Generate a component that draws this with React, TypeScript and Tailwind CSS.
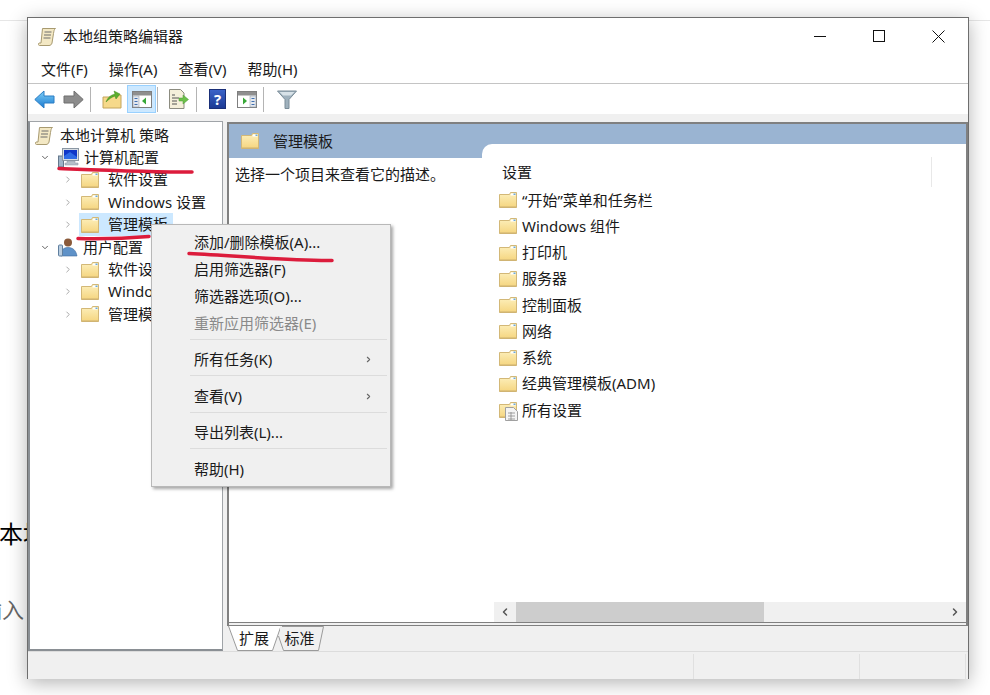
import React from 'react';
import { ChevronDown, ChevronRight, ChevronLeft } from 'lucide-react';

function Folder({ className = '' }: { className?: string }) {
    return (
        <svg viewBox="0 0 18 16" className={`w-[18px] h-[16px] shrink-0 ${className}`}>
            <defs>
                <linearGradient id="folderFill" x1="0" y1="0" x2="0" y2="1">
                    <stop offset="0" stopColor="#fdf0bd" />
                    <stop offset="1" stopColor="#f5d57f" />
                </linearGradient>
            </defs>
            <path d="M.5 2.500H10.500L11.500 .5h6v15H.5z" fill="url(#folderFill)" stroke="#d3b877" />
            <path d="M12 1.500h4.500v2H11.500z" fill="#fff" />
            <path d="M14.500 1.500h2v1.500h-2z" fill="#6aa9dc" />
            <path d="M.5 14.500h17v1H.5z" fill="#cdb071" />
        </svg>
    );
}

function Scroll({ className = '' }: { className?: string }) {
    return (
        <svg viewBox="0 0 19 19" className={`w-[19px] h-[19px] shrink-0 ${className}`}>
            <path d="M4.500 1.500h13c-1.500 1-1.500 2.500-2 5l-1.500 9.500c-.3 1.500-1.500 2.500-3 2.500H1.500c-1.200 0-1.500-2-.5-2.500h2z" fill="#f3e8c4" stroke="#a89a70" />
            <path d="M6.500 5h7M6 8h7M5.500 11h7" stroke="#6d6d6d" strokeWidth="1" />
        </svg>
    );
}

function Computer() {
    return (
        <svg viewBox="0 0 21 20" className="w-[21px] h-[20px] shrink-0">
            <rect x="0.500" y="8" width="5" height="11" fill="#9fb4c8" stroke="#64788c" />
            <rect x="4.500" y="0.500" width="16" height="12" fill="#d7dde3" stroke="#8b97a3" />
            <rect x="6" y="2" width="13" height="9" fill="#0f37c8" />
            <path d="M6 8l6-4 7 5v2H6z" fill="#2e6be6" />
            <path d="M9 13h8v2h3v2H7v-2h2z" fill="#b6c0ca" stroke="#8b97a3" strokeWidth=".5" />
        </svg>
    );
}

function User() {
    return (
        <svg viewBox="0 0 20 19" className="w-[20px] h-[19px] shrink-0">
            <circle cx="10" cy="4.500" r="4" fill="#8a5a3a" />
            <path d="M3 18c0-6 2.500-8.500 7-8.500s8 2.500 9 8.500z" fill="#5f92c8" stroke="#3f6c9e" strokeWidth=".6" />
            <rect x="0.500" y="7" width="4" height="11" rx="1" fill="#b9cde0" stroke="#5f7f9f" />
        </svg>
    );
}

function Sep() {
    return <div className="w-px h-[25px] bg-[#b4b4b4] shrink-0" />;
}

function Toolbar() {
    return (
        <div className="h-[30px] bg-white flex items-center pl-[6px] shrink-0">
            <svg viewBox="0 0 21 19" className="w-[21px] h-[19px] shrink-0">
                <defs>
                    <linearGradient id="backFill" x1="0" y1="0" x2="0" y2="1">
                        <stop offset="0" stopColor="#7fd0f7" />
                        <stop offset="1" stopColor="#1878d0" />
                    </linearGradient>
                </defs>
                <path d="M10 1L.8 9.500 10 18v-5h10V6H10z" fill="url(#backFill)" stroke="#2a7cc4" />
            </svg>
            <svg viewBox="0 0 21 19" className="w-[21px] h-[19px] shrink-0 ml-[8px]">
                <path d="M11 1l9.200 8.500L11 18v-5H1V6h10z" fill="#8c8c8c" stroke="#6f6f6f" />
            </svg>
            <div className="ml-[6px]"><Sep /></div>
            <svg viewBox="0 0 20 20" className="w-[20px] h-[20px] shrink-0 ml-[11px]">
                <path d="M1 8h7l5-2h6v13H1z" fill="#f6d98a" stroke="#c4a45c" />
                <path d="M4 13c2-5 5-7 9-8l-1-3 6 3-4 5-1-3c-3 1-6 3-9 6z" fill="#5cae2e" stroke="#3f8a1e" strokeWidth=".5" />
            </svg>
            <div className="ml-[5px] w-[29px] h-[28px] bg-[#cce8ff] border border-[#99d1ff] flex items-center justify-center shrink-0">
                <svg viewBox="0 0 20 17" className="w-[20px] h-[17px]">
                    <rect x=".5" y=".5" width="19" height="16" fill="#fff" stroke="#7f7f7f" />
                    <rect x="1" y="1" width="18" height="3.500" fill="#8f8f8f" />
                    <rect x="1" y="5" width="6" height="11" fill="#e4e8ee" stroke="#8b97a3" strokeWidth=".5" />
                    <path d="M2.500 7.500h3M2.500 10.500h3M2.500 13.500h3" stroke="#3f6fb0" />
                    <path d="M14 6.500v7l-4-3.500z" fill="#38a838" />
                </svg>
            </div>
            <div className="ml-[1px]"><Sep /></div>
            <svg viewBox="0 0 21 20" className="w-[21px] h-[20px] shrink-0 ml-[10px]">
                <path d="M1.500.5h11l3.500 3.500v15.500H1.500z" fill="#f5f0da" stroke="#8c8c80" />
                <path d="M4 6h3M4 9h7M4 12h5M4 15h5" stroke="#555" />
                <path d="M11 9h4V6l5.500 4.500L15 15v-3h-4z" fill="#6cc04a" stroke="#4e9a34" strokeWidth=".5" />
            </svg>
            <div className="ml-[7px]"><Sep /></div>
            <div className="ml-[12px] w-[17px] h-[20px] bg-gradient-to-b from-[#3a63c8] to-[#1c3a94] border border-[#1a2f78] flex items-center justify-center shrink-0">
                <span className="text-white font-bold text-[15px] leading-none">?</span>
            </div>
            <svg viewBox="0 0 20 17" className="w-[20px] h-[17px] shrink-0 ml-[11px]">
                <rect x=".5" y=".5" width="19" height="16" fill="#fff" stroke="#7f7f7f" />
                <rect x="1" y="1" width="18" height="3.500" fill="#8f8f8f" />
                <rect x="13" y="5" width="6" height="11" fill="#e4e8ee" stroke="#8b97a3" strokeWidth=".5" />
                <path d="M14.500 7.500h3M14.500 10.500h3M14.500 13.500h3" stroke="#3f6fb0" />
                <path d="M6 6.500v7l4-3.500z" fill="#38a838" />
            </svg>
            <div className="ml-[6px]"><Sep /></div>
            <svg viewBox="0 0 20 19" className="w-[20px] h-[19px] shrink-0 ml-[13px]">
                <path d="M.5 1h19L12 9.500V18.500H8V9.500z" fill="#9fb1bd" stroke="#7a8c98" />
                <path d="M2.500 2h15L14 5.500H6z" fill="#d8e2e8" />
            </svg>
        </div>
    );
}

interface TreeRowProps {
    level: number;
    open?: boolean;
    selected?: boolean;
    icon: React.ReactNode;
    label: string;
}

function TreeRow({ level, open, selected, icon, label }: TreeRowProps) {
    return (
        <div className="h-[22.400px] flex items-center">
            <div className={level === 1 ? 'w-[10px] shrink-0' : 'w-[33px] shrink-0'} />
            <div className="w-[10px] shrink-0 flex justify-center">
                {open
                    ? <ChevronDown className="w-[11px] h-[11px] text-[#444]" />
                    : <ChevronRight className="w-[11px] h-[11px] text-[#999]" />}
            </div>
            {level === 1 ? (
                <div className="ml-[8px] flex items-center gap-[5px]">
                    {icon}
                    <span>{label}</span>
                </div>
            ) : (
                <div className={`ml-[6px] flex items-center gap-[9px] h-[23px] pl-[2px] pr-[5px] ${selected ? 'bg-[#cce8ff]' : ''}`}>
                    {icon}
                    <span className="whitespace-nowrap">{label}</span>
                </div>
            )}
        </div>
    );
}

function Tree() {
    return (
        <div className="w-[195px] bg-white border-l-2 border-b-2 border-r border-t border-l-[#8a8f94] border-b-[#8a8f94] border-r-[#a0a4a8] border-t-[#a0a4a8] pt-[2px] overflow-hidden shrink-0">
            <div className="h-[22.400px] flex items-center pl-[5px] gap-[6px]">
                <Scroll />
                <span>本地计算机 策略</span>
            </div>
            <TreeRow level={1} open icon={<Computer />} label="计算机配置" />
            <TreeRow level={2} icon={<Folder />} label="软件设置" />
            <TreeRow level={2} icon={<Folder />} label="Windows 设置" />
            <TreeRow level={2} selected icon={<Folder />} label="管理模板" />
            <TreeRow level={1} open icon={<User />} label="用户配置" />
            <TreeRow level={2} icon={<Folder />} label="软件设置" />
            <TreeRow level={2} icon={<Folder />} label="Windows 设置" />
            <TreeRow level={2} icon={<Folder />} label="管理模板" />
        </div>
    );
}

const settings = ['“开始”菜单和任务栏', 'Windows 组件', '打印机', '服务器', '控制面板', '网络', '系统', '经典管理模板(ADM)'];

function ListPane() {
    return (
        <div className="flex-1 bg-[#9ab4d2] flex flex-col pt-[20px] min-w-0">
            <div className="flex-1 bg-white rounded-tl-[10px] relative flex flex-col min-h-0">
                <div className="h-[43px] pl-[20px] pt-[13px] flex items-center relative">
                    <span>设置</span>
                    <div className="absolute right-[34px] top-[13px] w-px h-[30px] bg-[#e8e8e8]" />
                </div>
                <div className="flex-1 pl-[17px]">
                    {settings.map((s) => (
                        <div key={s} className="h-[26.250px] flex items-center gap-[5px]">
                            <Folder />
                            <span>{s}</span>
                        </div>
                    ))}
                    <div className="h-[26.250px] flex items-center gap-[5px]">
                        <div className="relative w-[18px] h-[16px] shrink-0">
                            <Folder />
                            <svg viewBox="0 0 13 14" className="absolute left-[6px] top-[5px] w-[13px] h-[14px]">
                                <path d="M.5.5h8l4 4v9H.5z" fill="#f4f4f4" stroke="#a0a0a0" />
                                <path d="M3 6h7M3 9h7M3 12h7M6 5v8" stroke="#8a8a8a" strokeWidth=".8" />
                            </svg>
                        </div>
                        <span>所有设置</span>
                    </div>
                </div>
                <div className="h-[20px] ml-[12px] bg-[#f0f0f0] flex items-stretch shrink-0">
                    <div className="w-[22px] flex items-center justify-center">
                        <ChevronLeft className="w-[12px] h-[12px] text-[#555]" strokeWidth={3} />
                    </div>
                    <div className="w-[248px] bg-[#cdcdcd]" />
                    <div className="flex-1" />
                    <div className="w-[22px] flex items-center justify-center">
                        <ChevronRight className="w-[12px] h-[12px] text-[#555]" strokeWidth={3} />
                    </div>
                </div>
            </div>
        </div>
    );
}

function DetailPane() {
    return (
        <div className="h-[504px] border-l-2 border-t-2 border-r-2 border-b border-[#808080] pb-[2px] flex flex-col shrink-0">
            <div className="flex-1 min-h-0 bg-white flex border-b border-[#808080]">
                <div className="w-[253px] flex flex-col shrink-0">
                    <div className="h-[34px] bg-[#9ab4d2] flex items-center pl-[12px] gap-[14px]">
                        <Folder />
                        <span>管理模板</span>
                    </div>
                    <div className="pl-[6px] pt-[9px]">选择一个项目来查看它的描述。</div>
                </div>
                <ListPane />
            </div>
        </div>
    );
}

function Tabs() {
    return (
        <div className="flex h-[25px] pl-[1px]">
            <div className="relative w-[52px] flex items-center justify-center">
                <svg viewBox="0 0 52 25" className="absolute inset-0 w-[52px] h-[25px]">
                    <path d="M.5 0L9.500 24.500h35L53 0" fill="#fff" stroke="#9a9a9a" />
                </svg>
                <span className="relative">扩展</span>
            </div>
            <div className="relative w-[46px] -ml-[2px] flex items-center justify-center pr-[3px]">
                <svg viewBox="0 0 46 25" className="absolute inset-0 w-[46px] h-[25px]">
                    <path d="M.5 10L5.500 24.500h35L45.500 .5H4" fill="#f0f0f0" stroke="#9a9a9a" />
                </svg>
                <span className="relative">标准</span>
            </div>
        </div>
    );
}

function ContextMenu() {
    const Row = ({ text, h, arrow, off }: { text: string; h: string; arrow?: boolean; off?: boolean }) => (
        <div className={`${h} flex items-center justify-between pl-[42px] pr-[17px] ${off ? 'text-[#8a8a8a]' : ''}`}>
            <span>{text}</span>
            {arrow && <ChevronRight className="w-[9px] h-[9px] text-[#666]" strokeWidth={3} />}
        </div>
    );
    const Line = () => <div className="h-px ml-[38px] mr-[3px] bg-[#dcdcdc] shrink-0" />;
    return (
        <div className="absolute left-[123px] top-[206px] w-[240px] h-[263px] bg-[#f0f0f0] border border-[#b8b8b8] shadow-[2px_2px_3px_rgba(0,0,0,0.35)] pt-[3px]">
            <Row text="添加/删除模板(A)..." h="h-[27.200px] pt-[1px]" />
            <Row text="启用筛选器(F)" h="h-[27.200px] pt-[1px]" />
            <Row text="筛选器选项(O)..." h="h-[27.200px] pt-[1px]" />
            <Row text="重新应用筛选器(E)" h="h-[27.200px] pt-[1px]" off />
            <div className="h-[2.200px]" />
            <Line />
            <Row text="所有任务(K)" h="h-[35.500px] pt-[4px]" arrow />
            <Line />
            <Row text="查看(V)" h="h-[35.500px] pt-[4px]" arrow />
            <Line />
            <Row text="导出列表(L)..." h="h-[35.500px] pt-[4px]" />
            <Line />
            <Row text="帮助(H)" h="h-[35.500px] pt-[4px]" />
        </div>
    );
}

export default function App() {
    return (
        <div className="relative w-[990px] h-[695px] bg-white overflow-hidden font-['Noto_Sans','Noto_Sans_CJK_SC',sans-serif] text-[15px] leading-none text-[#1a1a1a]">
            {/* what is left of the page behind the window */}
            <div className="absolute left-0 right-0 top-[20px] h-px bg-[#e6e6e6]" />
            <div className="absolute left-[-1px] top-[522px] text-[24px] text-black whitespace-nowrap">本地</div>
            <div className="absolute left-[-20px] top-[598px] text-[22px] text-[#666] whitespace-nowrap">输入</div>

            <div className="absolute left-[27px] top-[17px] w-[942px] h-[662px] bg-[#f0f0f0] border-l border-r border-t border-[#6e6e6e] shadow-[0_4px_18px_rgba(0,0,0,0.3)] flex flex-col">
                <div className="h-[36px] bg-white flex items-center pl-[10px] shrink-0">
                    <Scroll />
                    <span className="ml-[6px]">本地组策略编辑器</span>
                    <div className="ml-auto flex items-center pr-[23px] gap-[46px]">
                        <svg viewBox="0 0 13 13" className="w-[13px] h-[13px]"><path d="M0 6.500h12" stroke="#111" /></svg>
                        <svg viewBox="0 0 13 13" className="w-[13px] h-[13px]"><rect x=".5" y=".5" width="11" height="11" fill="none" stroke="#111" /></svg>
                        <svg viewBox="0 0 13 13" className="w-[13px] h-[13px]"><path d="M.5.500l12 12M12.500.500l-12 12" stroke="#111" /></svg>
                    </div>
                </div>
                <div className="h-[30px] bg-white flex items-center pl-[13px] pt-[2px] gap-[21px] border-b border-[#c4c4c4] shrink-0">
                    <span>文件(F)</span>
                    <span>操作(A)</span>
                    <span>查看(V)</span>
                    <span>帮助(H)</span>
                </div>
                <Toolbar />
                <div className="flex-1 flex pt-[7px] min-h-0">
                    <Tree />
                    <div className="ml-[4px] flex-1 min-w-0 flex flex-col pt-[1px]">
                        <DetailPane />
                        <Tabs />
                    </div>
                </div>
                <div className="h-[28px] border-t border-[#dcdcdc] flex justify-end shrink-0 pt-[2px]">
                    <div className="w-[166px] border-l border-[#e0e0e0]" />
                    <div className="w-[107px] border-l border-r border-[#e0e0e0] mr-[2px]" />
                </div>
                <ContextMenu />
            </div>

            {/* red marks drawn over the screenshot */}
            <svg className="absolute inset-0 w-[990px] h-[695px] pointer-events-none" viewBox="0 0 990 695">
                <path d="M59 168.500C100 170 150 172 192 172" fill="none" stroke="#dc1c3c" strokeWidth="3.500" strokeLinecap="round" />
                <path d="M78 238.500C100 239 130 238 149 236.500" fill="none" stroke="#dc1c3c" strokeWidth="3.500" strokeLinecap="round" />
                <path d="M189 253.500C240 256 290 261 332 260.500" fill="none" stroke="#dc1c3c" strokeWidth="3.500" strokeLinecap="round" />
            </svg>
        </div>
    );
}
